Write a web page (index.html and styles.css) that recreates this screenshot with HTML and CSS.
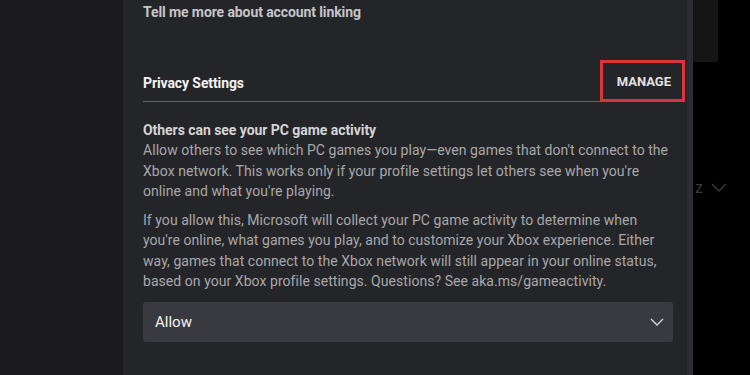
FILE: index.html
```html
<!DOCTYPE html>
<html>
<head>
    <meta charset="UTF-8">
    <title>Privacy Settings</title>
    <link rel="stylesheet" href="styles.css">
</head>
<body>
    <div class="page">
        <div class="side-left"></div>

        <div class="panel">
            <div class="link-row">Tell me more about account linking</div>

            <div class="section-head">
                <span class="section-title">Privacy Settings</span>
                <button class="manage">MANAGE</button>
            </div>

            <div class="setting">
                <div class="setting-title">Others can see your PC game activity</div>
                <p class="setting-text">Allow others to see which PC games you play—even games that don't connect to the Xbox network. This works only if your profile settings let others see when you're online and what you're playing.</p>
                <p class="setting-text">If you allow this, Microsoft will collect your PC game activity to determine when you're online, what games you play, and to customize your Xbox experience. Either way, games that connect to the Xbox network will still appear in your online status, based on your Xbox profile settings. Questions? See aka.ms/gameactivity.</p>

                <div class="select">
                    <span>Allow</span>
                    <svg width="14" height="8" viewBox="0 0 14 8"><path d="M1 1 L7 7 L13 1" fill="none" stroke="#d8d8d8" stroke-width="1.4"/></svg>
                </div>
            </div>
        </div>

        <div class="scroll-strip"></div>

        <div class="side-right">
            <div class="top-block"></div>
            <div class="behind">
                <span>z</span>
                <svg width="16" height="9" viewBox="0 0 16 9"><path d="M1 1 L8 8 L15 1" fill="none" stroke="#3c3c3c" stroke-width="1.4"/></svg>
            </div>
        </div>
    </div>
</body>
</html>
```

FILE: styles.css
```css
body {
    margin: 0;
    padding: 0;
    background-color: #000000;
    font-family: Roboto, "Noto Sans", sans-serif;
}
.page {
    display: flex;
    width: 750px;
    height: 375px;
    overflow: hidden;
}
.side-left {
    width: 123px;
    background-color: #1b1b1e;
}
.panel {
    width: 530px;
    padding: 0 14px 0 20px;
    background-color: #242529;
}
.link-row {
    height: 24px;
    line-height: 24px;
    font-size: 14px;
    font-weight: bold;
    letter-spacing: -0.1px;
    color: #c6c6c8;
}
.section-head {
    display: flex;
    justify-content: space-between;
    align-items: flex-end;
    margin-top: 36px;
    margin-right: -12px;
    border-bottom: 1px solid #66676a;
}
.section-title {
    padding-bottom: 10px;
    font-size: 14px;
    font-weight: bold;
    letter-spacing: -0.1px;
    color: #f2f2f2;
}
.manage {
    margin-bottom: -1px;
    padding: 11px 11px 10px 14px;
    background: none;
    border: 3px solid #d9363a;
    font-family: Roboto, sans-serif;
    font-size: 13px;
    font-weight: bold;
    color: #e2e2e2;
}
.setting {
    padding-top: 18px;
}
.setting-title {
    font-size: 14px;
    font-weight: bold;
    line-height: 20px;
    letter-spacing: -0.05px;
    color: #d4d4d6;
}
.setting-text {
    width: 530px;
    margin: 0 0 8px 0;
    font-size: 14px;
    line-height: 20.5px;
    letter-spacing: 0.05px;
    color: #a8a8aa;
}
.select {
    display: flex;
    justify-content: space-between;
    align-items: center;
    height: 40px;
    margin-top: 10px;
    padding: 0 9px 0 12px;
    background-color: #393a3f;
    border-radius: 3px;
    font-size: 15px;
    color: #f2f2f2;
}
.scroll-strip {
    width: 6px;
    background-color: #2c2d31;
}
.side-right {
    flex: 1;
    position: relative;
}
.top-block {
    width: 25px;
    height: 62px;
    background-color: #151516;
}
.behind {
    display: flex;
    align-items: center;
    gap: 8px;
    margin-top: 116px;
    padding-left: 2px;
    font-size: 16px;
    color: #3a3a3a;
}
```
